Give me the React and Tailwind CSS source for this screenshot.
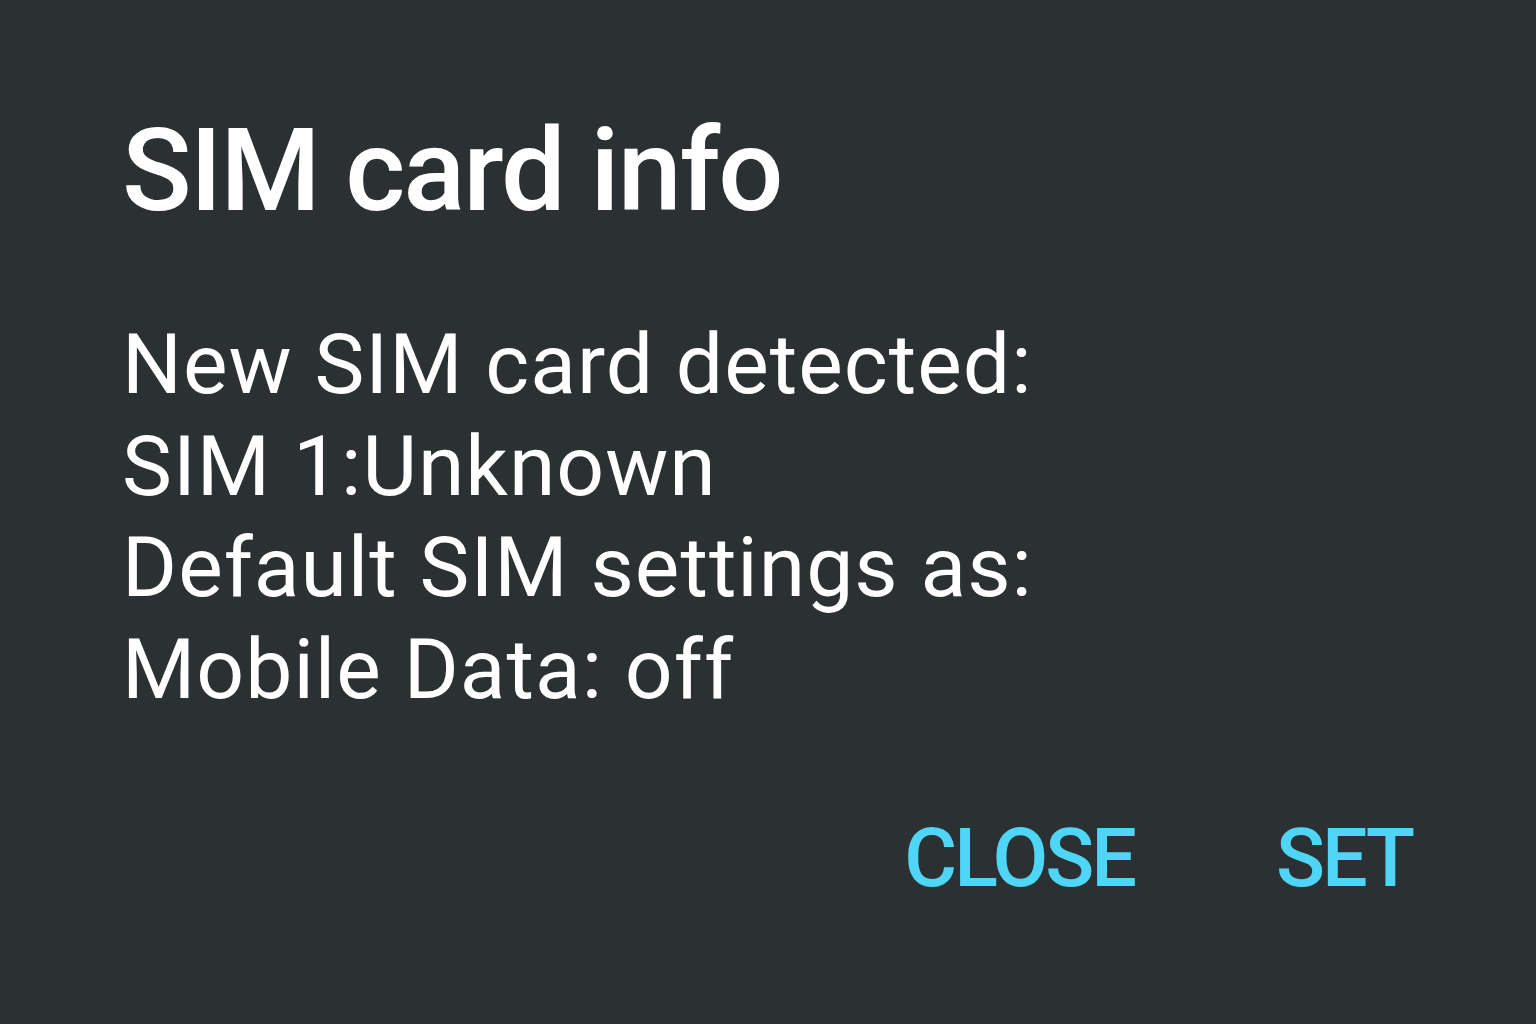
export default function App() {
  return (
    <div
      className="w-[1536px] h-[1024px] bg-[#2b3033] text-white flex flex-col pl-[122px] pr-[124px]"
      style={{ fontFamily: 'Roboto, "Noto Sans", sans-serif' }}
    >
      {/* Title */}
      <h1 className="text-[115px] font-medium leading-none mt-[113px] tracking-[-2px]">SIM card info</h1>

      {/* Message body */}
      <div className="mt-[86px] text-[84px] leading-[101.5px] tracking-[1px]">
        <p>New SIM card detected:</p>
        <p>SIM 1:Unknown</p>
        <p>Default SIM settings as:</p>
        <p>Mobile Data: off</p>
      </div>

      {/* Actions */}
      <div className="mt-[98px] flex justify-end gap-[142px] text-[81px] font-medium text-[#4fd5f6] leading-none tracking-[-3px]">
        <button>CLOSE</button>
        <button>SET</button>
      </div>
    </div>
  );
}
